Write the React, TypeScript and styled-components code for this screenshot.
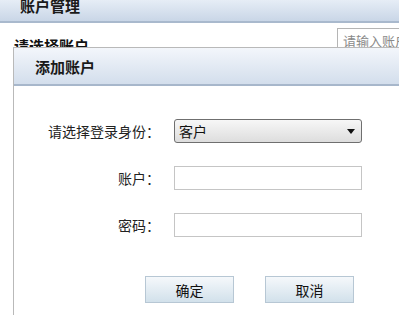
import styled, { createGlobalStyle } from 'styled-components';

const GlobalStyle = createGlobalStyle`
  html, body {
    margin: 0;
    padding: 0;
    background: #ffffff;
    overflow: hidden;
  }
  body {
    font-family: "Liberation Sans", "Noto Sans CJK SC", sans-serif;
    color: #222;
  }
`;

const Page = styled.div`
  position: relative;
  width: 399px;
  height: 315px;
  overflow: hidden;
  background: #fff;
`;

const TopBar = styled.div`
  height: 23px;
  display: flex;
  align-items: flex-end;
  padding: 0 0 5px 20px;
  box-sizing: border-box;
  overflow: hidden;
  background: linear-gradient(#e6edf6, #c9d6e7);
  border-bottom: 2px solid #a9b9cd;
`;

const TopTitle = styled.span`
  font-family: "Noto Sans CJK SC", sans-serif;
  font-size: 15px;
  font-weight: 700;
  line-height: 20px;
  color: #1a1a1a;
`;

const FilterRow = styled.div`
  display: flex;
  justify-content: space-between;
  align-items: flex-start;
  padding: 5px 0 0 14px;
`;

const FilterLabel = styled.span`
  font-family: "Noto Sans CJK SC", sans-serif;
  font-size: 15px;
  font-weight: 700;
  line-height: 18px;
  margin-top: 9px;
  color: #111;
`;

const SearchBox = styled.div`
  width: 80px;
  height: 22px;
  margin-left: auto;
  margin-right: -18px;
  border: 1px solid #b5b5b5;
  box-sizing: border-box;
  padding: 4px 0 0 5px;
  font-family: "Noto Sans CJK SC", sans-serif;
  font-size: 13px;
  line-height: 16px;
  color: #8a8a8a;
  white-space: nowrap;
  overflow: hidden;
`;

const Dialog = styled.div`
  position: absolute;
  left: 13px;
  top: 47px;
  right: -20px;
  bottom: -20px;
  background: #fff;
  border: 1px solid #b9b9b9;
  display: flex;
  flex-direction: column;
`;

const DialogHeader = styled.div`
  height: 36px;
  display: flex;
  align-items: center;
  padding: 0 0 0 21px;
  background: linear-gradient(#f3f6fb, #d3deec);
  border-bottom: 2px solid #a7b7cb;
`;

const DialogTitle = styled.span`
  font-family: "Noto Sans CJK SC", sans-serif;
  font-size: 15px;
  font-weight: 700;
  color: #1a1a1a;
`;

const Form = styled.div`
  display: grid;
  grid-template-columns: 146px 188px;
  column-gap: 14px;
  row-gap: 23px;
  align-items: center;
  padding: 33px 0 0 0;
`;

const Label = styled.label`
  font-family: "Noto Sans CJK SC", sans-serif;
  font-size: 14px;
  color: #222;
  text-align: right;
  white-space: nowrap;
`;

const SelectBox = styled.div`
  height: 24px;
  box-sizing: border-box;
  border: 1px solid #6f6f6f;
  border-radius: 3px;
  background: linear-gradient(#f7f7f7, #dddddd);
  display: flex;
  align-items: center;
  justify-content: space-between;
  padding: 0 6px 0 4px;
  font-family: "Noto Sans CJK SC", sans-serif;
  font-size: 14px;
  color: #111;
`;

const Arrow = styled.span`
  width: 0;
  height: 0;
  border-left: 4px solid transparent;
  border-right: 4px solid transparent;
  border-top: 5px solid #111;
`;

const TextInput = styled.div`
  height: 24px;
  box-sizing: border-box;
  border: 1px solid #c5c5c5;
  background: #fff;
`;

const ButtonRow = styled.div`
  display: flex;
  gap: 31px;
  padding: 39px 0 0 131px;
`;

const Button = styled.button`
  width: 89px;
  height: 27px;
  box-sizing: border-box;
  border: 1px solid #b7c7d4;
  background: linear-gradient(#f5f8fb, #d2e1eb);
  font-family: "Noto Sans CJK SC", sans-serif;
  font-size: 14px;
  color: #111;
  padding: 0;
  cursor: pointer;
`;

export default function App() {
  return (
    <>
      <GlobalStyle />
      <Page>
        <TopBar>
          <TopTitle>账户管理</TopTitle>
        </TopBar>
        <FilterRow>
          <FilterLabel>请选择账户</FilterLabel>
          <SearchBox>请输入账户</SearchBox>
        </FilterRow>
        <Dialog>
          <DialogHeader>
            <DialogTitle>添加账户</DialogTitle>
          </DialogHeader>
          <Form>
            <Label>请选择登录身份：</Label>
            <SelectBox>
              <span>客户</span>
              <Arrow />
            </SelectBox>
            <Label>账户：</Label>
            <TextInput />
            <Label>密码：</Label>
            <TextInput />
          </Form>
          <ButtonRow>
            <Button>确定</Button>
            <Button>取消</Button>
          </ButtonRow>
        </Dialog>
      </Page>
    </>
  );
}
